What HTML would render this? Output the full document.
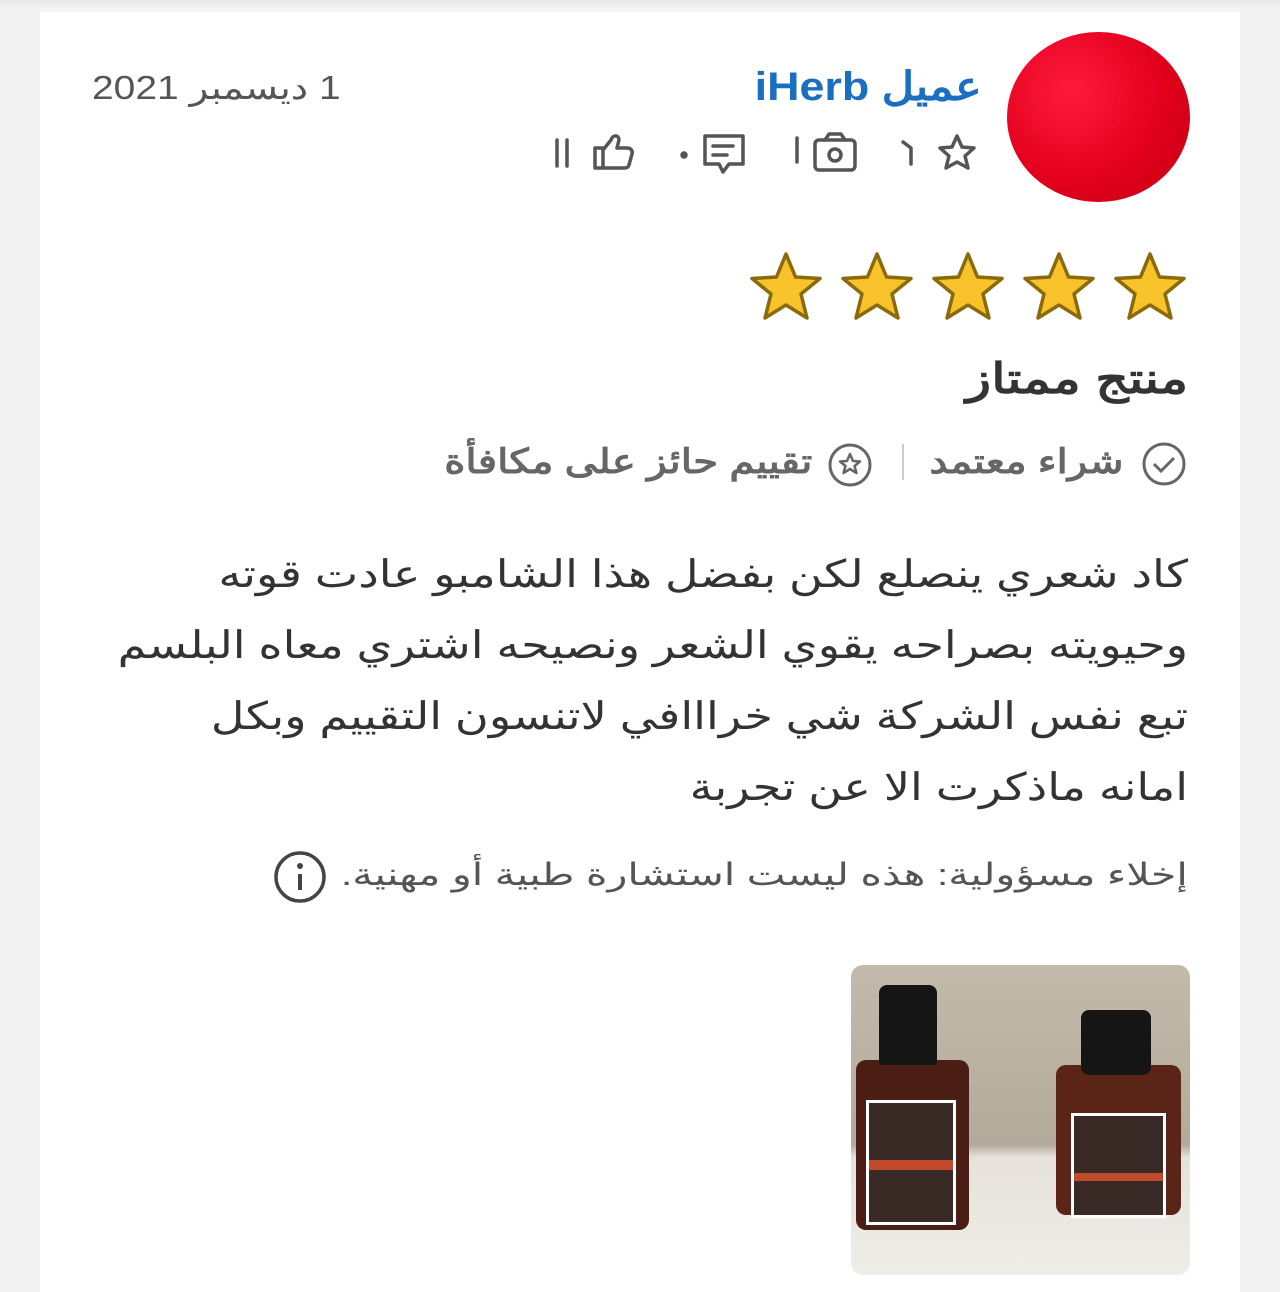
<!DOCTYPE html>
<html><head><meta charset="utf-8"><style>
body{margin:0;width:1280px;height:1280px;background:#f2f2f2;font-family:"Liberation Sans","Noto Sans CJK SC",sans-serif;overflow:hidden;position:relative}
.card{position:absolute;left:40px;top:12px;width:1200px;height:1280px;background:#fff}
.a{position:absolute;white-space:nowrap}
.r{direction:rtl;text-align:right;transform-origin:right center}
</style></head><body>
<div class="card"></div>
<div class="a" style="left:0;top:0;width:1280px;height:12px;background:linear-gradient(#e8e8e8,#f6f6f6)"></div>
<div class="a" style="left:1007px;top:32px;width:183px;height:170px;border-radius:50%;background:radial-gradient(circle at 35% 35%,#ff1a3c,#e3001d 55%,#c3000f)"></div>
<div class="a r" style="right:298px;top:64px;font-size:40px;color:#1a6fc0;font-weight:bold;transform:scaleX(1.12)">عميل iHerb</div>
<div class="a" style="left:92px;top:68px;font-size:33px;color:#555;direction:rtl;transform:scaleX(1.18);transform-origin:left center">1 ديسمبر 2021</div>
<svg class="a" style="left:545px;top:128px" width="440" height="50" viewBox="0 0 440 50" fill="none" stroke="#555" stroke-width="3.5" stroke-linejoin="round" stroke-linecap="round">
<path d="M412 8l5 11 12 1-9 8 3 12-11-6-11 6 3-12-9-8 12-1z"/>
<path d="M358 14l8 6v16"/>
<rect x="270" y="12" width="40" height="30" rx="4"/><path d="M280 12l4-6h12l4 6"/><circle cx="290" cy="27" r="6"/>
<path d="M252 10v24"/>
<path d="M160 8h38v28h-14l-6 8-4-8h-14z"/><path d="M168 18h20M168 27h14"/>
<circle cx="139" cy="27" r="2" fill="#555"/>
<path d="M50 20h8v20h-8z M58 22l8-10c2-6 8-5 8 0l-2 8h10c4 0 6 3 5 6l-3 11c-1 3-3 3-6 3H58"/>
<path d="M12 12v26M22 12v26"/>
</svg>
<svg class="a" style="left:745px;top:250px" width="450" height="72" viewBox="0 0 450 72">
<g fill="#f7c22a" stroke="#8a6a0a" stroke-width="3.5" stroke-linejoin="round">
<path id="s" d="M41 4l9.5 23 24.5 1.5-19 15.5 6 24-21-13-21 13 6-24-19-15.5 24.5-1.5z"/>
<use href="#s" x="91"/><use href="#s" x="182"/><use href="#s" x="273"/><use href="#s" x="364"/>
</g></svg>
<div class="a r" style="right:92px;top:354px;font-size:42px;font-weight:bold;color:#333;transform:scaleX(1.24)">منتج ممتاز</div>
<svg class="a" style="left:1140px;top:440px" width="48" height="48"><circle cx="24" cy="24" r="20" fill="none" stroke="#666" stroke-width="3"/><path d="M14 24l7 7 13-13" fill="none" stroke="#666" stroke-width="3"/></svg>
<div class="a r" style="right:156px;top:442px;font-size:34px;font-weight:bold;color:#666;transform:scaleX(1.18)">شراء معتمد</div>
<div class="a" style="left:902px;top:444px;width:2px;height:36px;background:#ccc"></div>
<svg class="a" style="left:826px;top:441px" width="48" height="48"><circle cx="24" cy="24" r="20" fill="none" stroke="#666" stroke-width="3"/><path d="M24 13l3 7 7 .5-5.5 4.5 2 7-6.5-4-6.5 4 2-7-5.5-4.5 7-.5z" fill="none" stroke="#666" stroke-width="2.5" stroke-linejoin="round"/></svg>
<div class="a r" style="right:468px;top:442px;font-size:34px;font-weight:bold;color:#666;transform:scaleX(1.19)">تقييم حائز على مكافأة</div>
<div class="a r" style="right:92px;top:540px;font-size:38px;line-height:71px;color:#333;transform:scaleX(1.215)">كاد شعري ينصلع لكن بفضل هذا الشامبو عادت قوته<br>وحيويته بصراحه يقوي الشعر ونصيحه اشتري معاه البلسم<br>تبع نفس الشركة شي خرااافي لاتنسون التقييم وبكل<br>امانه ماذكرت الا عن تجربة</div>
<div class="a r" style="right:92px;top:857px;font-size:31px;color:#555;transform:scaleX(1.33)">إخلاء مسؤولية: هذه ليست استشارة طبية أو مهنية.</div>
<svg class="a" style="left:272px;top:849px" width="56" height="56"><circle cx="28" cy="28" r="24" fill="none" stroke="#444" stroke-width="3.5"/><circle cx="28" cy="17" r="3" fill="#444"/><path d="M28 25v16" stroke="#444" stroke-width="4"/></svg>
<div class="a" style="left:851px;top:965px;width:339px;height:310px;border-radius:12px;overflow:hidden;background:linear-gradient(#c3baab 0%,#b3aa9b 58%,#e6e2db 62%,#efede8 100%)">
 <div class="a" style="left:5px;top:95px;width:113px;height:170px;border-radius:10px;background:#4a1e14"></div>
 <div class="a" style="left:28px;top:20px;width:58px;height:80px;border-radius:8px 8px 4px 4px;background:#151515"></div>
 <div class="a" style="left:15px;top:135px;width:90px;height:125px;background:#fff"><div style="margin:3px;height:119px;background:#3a2a26"><div style="position:absolute;left:3px;top:60px;width:84px;height:10px;background:#c04a2a"></div></div></div>
 <div class="a" style="left:205px;top:100px;width:125px;height:150px;border-radius:10px;background:#5a2416"></div>
 <div class="a" style="left:230px;top:45px;width:70px;height:65px;border-radius:8px;background:#151515"></div>
 <div class="a" style="left:220px;top:148px;width:95px;height:105px;background:#fff"><div style="margin:3px;height:99px;background:#3a2a26"><div style="position:absolute;left:3px;top:60px;width:89px;height:8px;background:#c04a2a"></div></div></div>
</div>
</body></html>
